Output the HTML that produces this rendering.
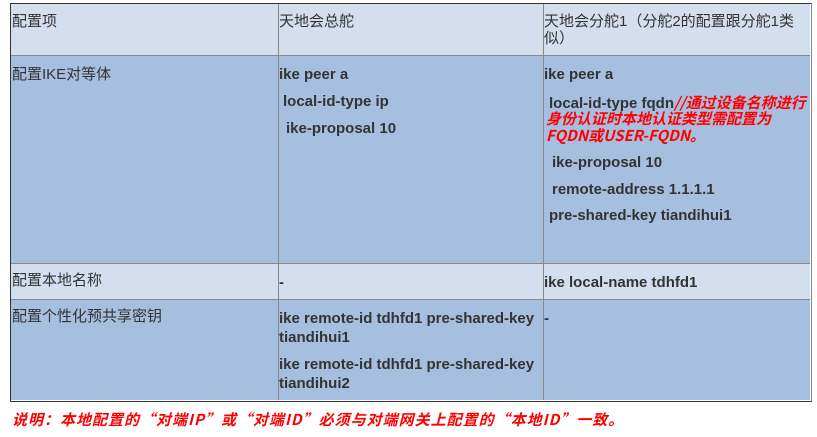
<!DOCTYPE html>
<html><head><meta charset="utf-8"><style>
body{margin:0;width:817px;height:437px;background:#fff;position:relative;overflow:hidden;font-family:"Liberation Sans","Noto Sans CJK SC",sans-serif;font-size:14px;color:#333;}
.r{position:absolute;left:11px;width:799px;}
.v{position:absolute;top:4px;height:396px;width:1px;background:#888;}
.h{position:absolute;left:11px;width:799px;height:1px;background:#888;}
.t{position:absolute;white-space:nowrap;line-height:17px;}
.b{font-weight:bold;font-size:15px;}
.red{color:#f00;font-style:italic;font-weight:bold;font-size:15px;font-family:"Noto Sans CJK SC","Liberation Sans",sans-serif;}
</style></head><body>
<div class="r" style="top:4px;height:51px;background:#d3deee"></div>
<div class="r" style="top:55px;height:208px;background:#a6bfdf"></div>
<div class="r" style="top:263px;height:36px;background:#d3deee"></div>
<div class="r" style="top:299px;height:101px;background:#a6bfdf"></div>
<div class="h" style="top:55px"></div>
<div class="h" style="top:263px"></div>
<div class="h" style="top:299px"></div>
<div class="v" style="left:278px"></div>
<div class="v" style="left:543px"></div>
<div style="position:absolute;left:10px;top:3px;width:800px;height:397px;border:1px solid #333;border-right-color:#888;"></div>

<div class="t" style="left:12px;top:13px;font-size:15px">配置项</div>
<div class="t" style="left:279px;top:13px;font-size:15px">天地会总舵</div>
<div class="t" style="left:544px;top:13px;font-size:15px">天地会分舵1（分舵2的配置跟分舵1类</div>
<div class="t" style="left:544px;top:30px;font-size:15px">似）</div>

<div class="t" style="left:12px;top:66px;font-size:15px">配置IKE对等体</div>
<div class="t b" style="left:279px;top:66px">ike peer a</div>
<div class="t b" style="left:283px;top:93px">local-id-type ip</div>
<div class="t b" style="left:286px;top:120px">ike-proposal 10</div>

<div class="t b" style="left:544px;top:66px">ike peer a</div>
<div class="t b" style="left:549px;top:94px">local-id-type fqdn<span class="red">//通过设备名称进行</span></div>
<div class="t red" style="left:546px;top:110px">身份认证时本地认证类型需配置为</div>
<div class="t red" style="left:546px;top:127px">FQDN或USER-FQDN。</div>
<div class="t b" style="left:552px;top:154px">ike-proposal 10</div>
<div class="t b" style="left:552px;top:181px">remote-address 1.1.1.1</div>
<div class="t b" style="left:549px;top:207px">pre-shared-key tiandihui1</div>

<div class="t" style="left:12px;top:272px;font-size:15px">配置本地名称</div>
<div class="t b" style="left:279px;top:274px">-</div>
<div class="t b" style="left:544px;top:274px">ike local-name tdhfd1</div>

<div class="t" style="left:12px;top:308px;font-size:15px">配置个性化预共享密钥</div>
<div class="t b" style="left:279px;top:310px">ike remote-id tdhfd1 pre-shared-key</div>
<div class="t b" style="left:279px;top:329px">tiandihui1</div>
<div class="t b" style="left:279px;top:356px">ike remote-id tdhfd1 pre-shared-key</div>
<div class="t b" style="left:279px;top:375px">tiandihui2</div>
<div class="t b" style="left:544px;top:310px">-</div>

<div class="t red" style="left:12px;top:411px;letter-spacing:1px">说明：本地配置的“对端IP”或“对端ID”必须与对端网关上配置的“本地ID”一致。</div>
</body></html>
